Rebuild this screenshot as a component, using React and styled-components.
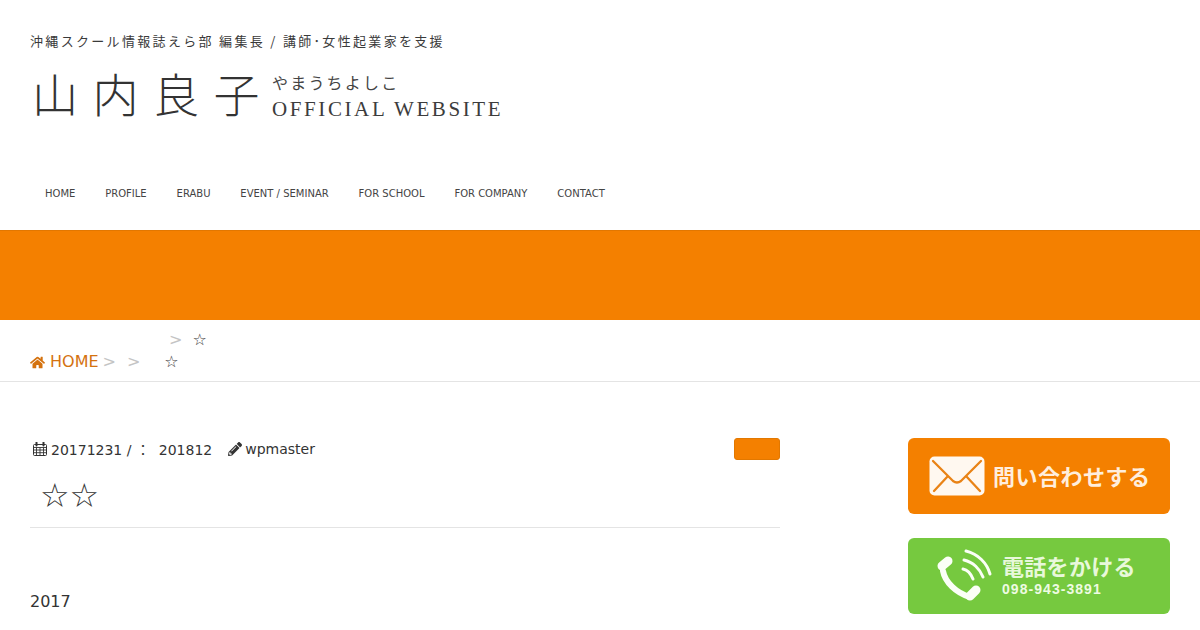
import React from "react";
import styled, { createGlobalStyle } from "styled-components";
import { FaHome, FaPencilAlt } from "react-icons/fa";

const Global = createGlobalStyle`
  html, body { margin: 0; padding: 0; background: #fff; }
  body { height: 630px; overflow: hidden; font-family: "DejaVu Sans", "Noto Sans CJK JP", sans-serif; color: #333; }
`;

const Header = styled.header`
  height: 230px;
  box-sizing: border-box;
  padding: 32px 30px 0;
`;
const Tagline = styled.div`
  font: 13px/18px "Noto Sans CJK JP", sans-serif;
  letter-spacing: 2.32px;
  color: #3a3a3a;
  white-space: nowrap;
`;
const Logo = styled.div`
  display: flex;
  align-items: flex-start;
  height: 60px;
  margin-top: 12px;
  padding-left: 2px;
`;
const LogoName = styled.div`
  font: 300 46px/60px "Noto Sans CJK JP", serif;
  letter-spacing: 14.5px;
  color: #333;
  white-space: nowrap;
  margin-right: -2px;
`;
const LogoSide = styled.div`
  display: flex;
  flex-direction: column;
  padding-top: 8px;
`;
const LogoKana = styled.div`
  font: 400 16px/24px "Noto Sans CJK JP", serif;
  letter-spacing: 2.2px;
  color: #444;
`;
const LogoEn = styled.div`
  font: 21px/26px "Liberation Serif", serif;
  letter-spacing: 2.6px;
  color: #3c3c3c;
  white-space: nowrap;
  margin-top: 2px;
`;
const Nav = styled.nav`
  display: flex;
  gap: 29.9px;
  margin-top: 64px;
  padding-left: 15px;
`;
const NavItem = styled.a`
  font-size: 10px;
  line-height: 16px;
  color: #444;
  white-space: nowrap;
`;
const Band = styled.div`
  height: 90px;
  box-sizing: border-box;
  background: #f48000;
  border-top: 1px solid #e27700;
`;
const Crumbs = styled.div`
  height: 62px;
  box-sizing: border-box;
  padding: 9px 30px 0;
  border-bottom: 1px solid #e4e4e4;
  font-size: 16px;
  line-height: 22px;
`;
const CrumbRow = styled.div`
  display: flex;
  align-items: center;
  height: 22px;
  padding-left: ${p => p.$indent || 0}px;
`;
const HomeLink = styled.a`
  display: inline-flex;
  align-items: center;
  gap: 5px;
  color: #d4720f;
  svg { width: 15px; height: 15px; }
`;
const Sep = styled.span`
  color: #c4c4c4;
  margin-left: ${p => p.$left || 0}px;
`;
const Star = styled.span`
  color: #444;
  margin-left: ${p => p.$left || 0}px;
`;
const Main = styled.main`
  display: flex;
  justify-content: space-between;
  padding: 56px 30px 0;
`;
const Article = styled.article`
  width: 750px;
`;
const MetaRow = styled.div`
  display: flex;
  align-items: center;
  justify-content: space-between;
  height: 22px;
`;
const Meta = styled.div`
  display: flex;
  align-items: center;
  padding-left: 3px;
  font-size: 14px;
  color: #333;
  white-space: pre;
`;
const MetaIcon = styled.span`
  display: inline-flex;
  margin-right: ${p => p.$gap}px;
  svg { display: block; width: 14px; height: 14px; }
`;
const Author = styled.span`
  display: inline-flex;
  align-items: center;
  margin-left: 16px;
`;
const Tag = styled.span`
  width: 46px;
  height: 22px;
  box-sizing: border-box;
  background: #f48000;
  border: 1px solid #e27800;
  border-radius: 3px;
`;
const Title = styled.h1`
  margin: 14px 0 0;
  padding: 0 0 9px 10px;
  height: 54px;
  box-sizing: border-box;
  font-size: 33px;
  line-height: 44px;
  font-weight: 400;
  color: #333;
  border-bottom: 1px solid #e4e4e4;
`;
const Body = styled.p`
  margin: 63px 0 0;
  font-size: 16px;
  line-height: 22px;
  color: #333;
`;
const Side = styled.aside`
  width: 262px;
  display: flex;
  flex-direction: column;
  gap: 24px;
`;
const Banner = styled.a`
  height: 76px;
  box-sizing: border-box;
  border-radius: 6px;
  display: flex;
  align-items: center;
  color: #fff;
  background: ${p => p.$bg};
  padding-left: ${p => p.$pad}px;
`;
const MailText = styled.span`
  font: 700 22px/30px "Noto Sans CJK JP", sans-serif;
  letter-spacing: 0.5px;
  margin-left: 8px;
  margin-top: -3px;
  color: #ffeedd;
`;
const PhoneBlock = styled.div`
  display: flex;
  flex-direction: column;
  margin-left: 9px;
  margin-top: -6px;
`;
const PhoneTitle = styled.span`
  font: 700 22px/30px "Noto Sans CJK JP", sans-serif;
  letter-spacing: 0.3px;
  color: #e8f8da;
`;
const PhoneNumber = styled.span`
  font: 700 14px/16px "Liberation Sans", sans-serif;
  letter-spacing: 1.05px;
  color: #eefbe2;
  margin-top: 1px;
`;

const CalendarIcon = () => (
  <svg viewBox="0 0 14 14" fill="none" stroke="#333" strokeWidth="1">
    <rect x="0.5" y="2.5" width="13" height="11" rx="1" />
    <path d="M0.5 5.5h13M0.5 8h13M0.5 10.7h13M3.5 5.5v8M7 5.5v8M10.5 5.5v8" strokeWidth="0.9" />
    <path d="M3.5 0.5v3M10.5 0.5v3" strokeWidth="2" strokeLinecap="round" />
  </svg>
);

const MailIcon = () => (
  <svg width="56" height="40" viewBox="0 0 56 40" style={{ flex: "none" }}>
    <rect x="0.5" y="0.5" width="55" height="39" rx="5" fill="#fff8f0" />
    <path d="M4 5 L24 25 Q28 28 32 25 L52 5 M5 35 L19 20 M51 35 L37 20" fill="none" stroke="#e98316" strokeWidth="2.3" strokeLinecap="round" />
  </svg>
);

const PhoneIcon = () => (
  <svg width="62" height="60" viewBox="0 0 62 60" style={{ flex: "none" }}>
    <g fill="none" stroke="#fbfff7" strokeLinecap="round">
      <path d="M12 25 C14 36 25 47 39 51" strokeWidth="6" />
      <path d="M11 20 L17 15" strokeWidth="9" />
      <path d="M39 50 L45 44" strokeWidth="9" />
      <path d="M35 5 C47 8 56 17 59 28" strokeWidth="3" />
      <path d="M33 14 C42 16 49 23 52 31" strokeWidth="3" />
      <path d="M32 23 C37 24 40 28 42 33" strokeWidth="3" />
    </g>
  </svg>
);

const navItems = ["HOME", "PROFILE", "ERABU", "EVENT / SEMINAR", "FOR SCHOOL", "FOR COMPANY", "CONTACT"];

export default function App() {
  return (
    <>
      <Global />
      <Header>
        <Tagline>沖縄スクール情報誌えら部 編集長 / 講師･女性起業家を支援</Tagline>
        <Logo>
          <LogoName>山内良子</LogoName>
          <LogoSide>
            <LogoKana>やまうちよしこ</LogoKana>
            <LogoEn>OFFICIAL WEBSITE</LogoEn>
          </LogoSide>
        </Logo>
        <Nav>
          {navItems.map(n => <NavItem key={n}>{n}</NavItem>)}
        </Nav>
      </Header>
      <Band />
      <Crumbs>
        <CrumbRow $indent={139}>
          <Sep>&gt;</Sep>
          <Star $left={10}>☆</Star>
        </CrumbRow>
        <CrumbRow>
          <HomeLink><FaHome />HOME</HomeLink>
          <Sep $left={4}>&gt;</Sep>
          <Sep $left={11}>&gt;</Sep>
          <Star $left={24}>☆</Star>
        </CrumbRow>
      </Crumbs>
      <Main>
        <Article>
          <MetaRow>
            <Meta>
              <MetaIcon $gap={4}><CalendarIcon /></MetaIcon>
              20171231 / ：  201812
              <Author>
                <MetaIcon $gap={3}><FaPencilAlt /></MetaIcon>
                wpmaster
              </Author>
            </Meta>
            <Tag />
          </MetaRow>
          <Title>☆☆</Title>
          <Body>2017</Body>
        </Article>
        <Side>
          <Banner $bg="#f48000" $pad={21}>
            <MailIcon />
            <MailText>問い合わせする</MailText>
          </Banner>
          <Banner $bg="#76c93f" $pad={23}>
            <PhoneIcon />
            <PhoneBlock>
              <PhoneTitle>電話をかける</PhoneTitle>
              <PhoneNumber>098-943-3891</PhoneNumber>
            </PhoneBlock>
          </Banner>
        </Side>
      </Main>
    </>
  );
}
